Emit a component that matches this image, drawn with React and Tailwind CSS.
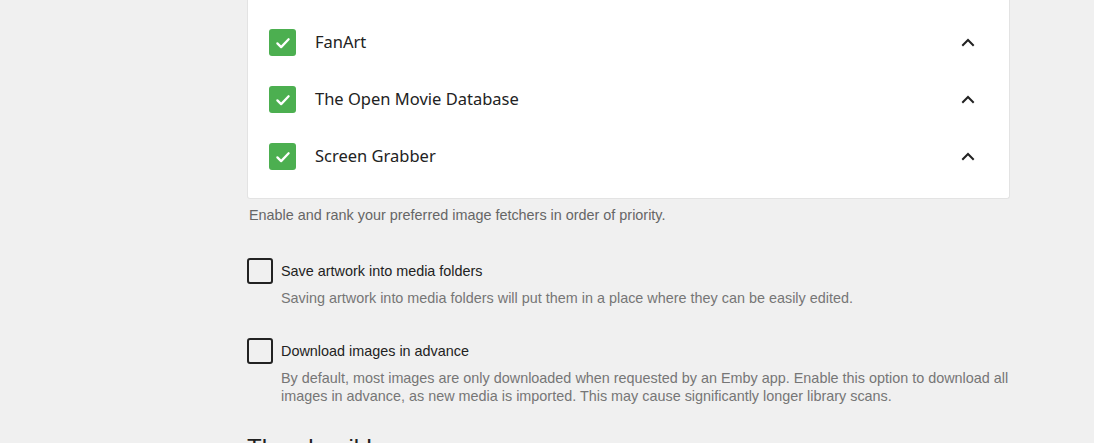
import React from "react";

const Check = () => (
  <svg width="18" height="18" viewBox="0 0 24 24" fill="none" stroke="white" strokeWidth="3" strokeLinecap="round" strokeLinejoin="round">
    <path d="M4.5 12.5l5 5L19.5 7" />
  </svg>
);

const Chevron = () => (
  <svg width="24" height="24" viewBox="0 0 24 24" fill="none" stroke="#222" strokeWidth="2" strokeLinecap="square">
    <path d="M7 14l5-5 5 5" />
  </svg>
);

const fetchers = ["FanArt", "The Open Movie Database", "Screen Grabber"];

function Option({ label, desc }) {
  return (
    <div className="flex items-start">
      <div className="w-[26px] h-[26px] border-2 border-[#222] rounded-[3px] shrink-0" />
      <div className="ml-[8px] flex flex-col">
        <div className="text-[14.4px] leading-[26px] text-[#222]">{label}</div>
        <div className="mt-[5px] text-[14.4px] leading-[18px] text-[#767676] w-[731px]">{desc}</div>
      </div>
    </div>
  );
}

export default function App() {
  return (
    <div className="min-h-[443px] h-[443px] overflow-hidden bg-[#f0f0f0]" style={{ fontFamily: '"Liberation Sans", Arial, sans-serif' }}>
      <div className="ml-[247px] w-[763px]">
        <div className="bg-white border border-t-0 border-[#e3e3e3] rounded-b-[3px] pt-[14px] pb-[13px] pl-[21px] pr-[29px]">
          {fetchers.map((f) => (
            <div key={f} className="h-[57px] flex items-center">
              <div className="w-[27px] h-[27px] rounded-[3px] bg-[#4caf50] flex items-center justify-center">
                <Check />
              </div>
              <div className="ml-[19px] flex-1 text-[16.5px] text-[#222]" style={{ fontFamily: '"Noto Sans", "Open Sans", sans-serif' }}>{f}</div>
              <Chevron />
            </div>
          ))}
        </div>
        <div className="mt-[8px] ml-[2px] text-[14.4px] leading-[17px] text-[#666]">
          Enable and rank your preferred image fetchers in order of priority.
        </div>
        <div className="mt-[34px] flex flex-col gap-[31px]">
          <Option
            label="Save artwork into media folders"
            desc="Saving artwork into media folders will put them in a place where they can be easily edited."
          />
          <Option
            label="Download images in advance"
            desc="By default, most images are only downloaded when requested by an Emby app. Enable this option to download all images in advance, as new media is imported. This may cause significantly longer library scans."
          />
        </div>
        <div className="mt-[28px] text-[24px] leading-[30px] text-[#222]">Thumbnail Images</div>
      </div>
    </div>
  );
}
